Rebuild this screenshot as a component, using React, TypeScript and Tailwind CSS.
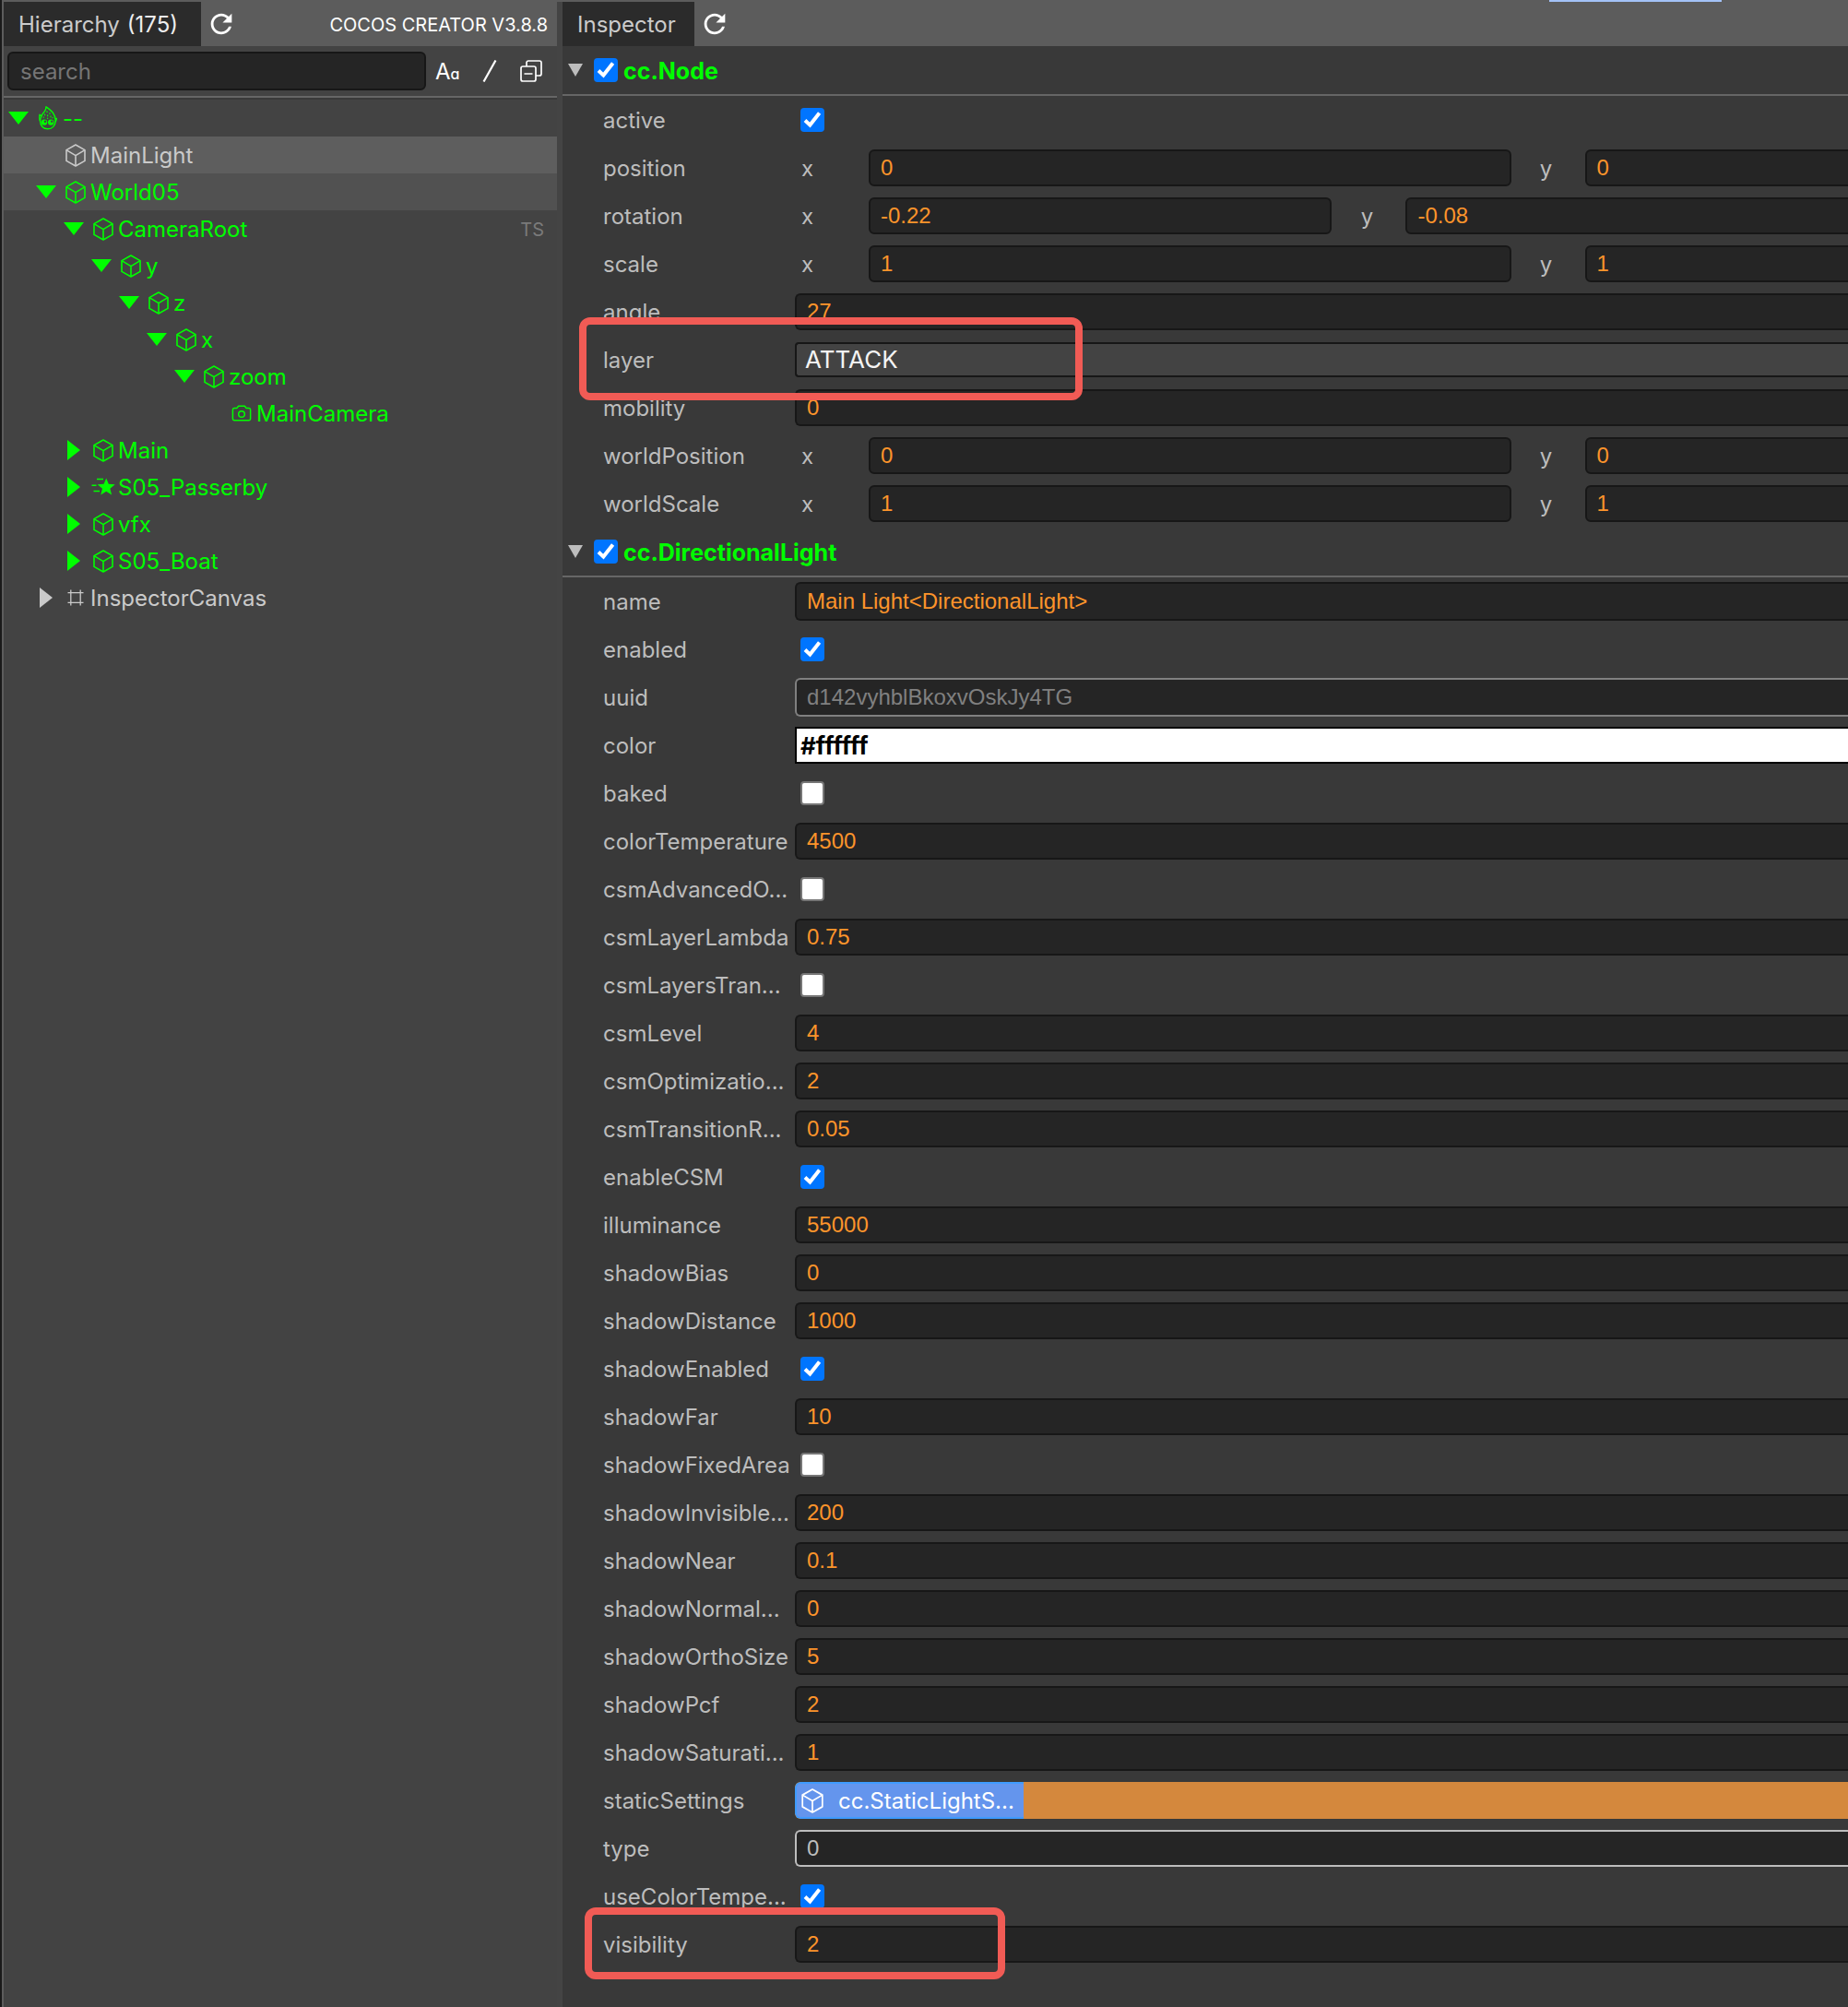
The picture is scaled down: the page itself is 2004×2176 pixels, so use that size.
import type { ReactNode } from "react";

type IconName = "cocos" | "cube" | "camera" | "star" | "frame";

function CubeIcon({ className }: { className: string }) {
  return (
    <svg viewBox="0 0 22 25" className={className} fill="none" stroke="currentColor" strokeWidth="1.6" strokeLinejoin="round" aria-hidden="true">
      <path d="M11 1 21 6.6V18.4L11 24 1 18.4V6.6Z" />
      <path d="M1 6.6 11 12.6 21 6.6M11 12.6V24" />
    </svg>
  );
}

function CameraIcon() {
  return (
    <svg viewBox="0 0 22 18" className="h-[18px] w-[22px]" fill="none" stroke="currentColor" strokeWidth="1.5" strokeLinejoin="round" aria-hidden="true">
      <path d="M3 3.4H6L7.6 1.2H14.4L16 3.4H19A1.8 1.8 0 0 1 20.6 5.2V15A1.8 1.8 0 0 1 19 16.8H3A1.8 1.8 0 0 1 1.4 15V5.2A1.8 1.8 0 0 1 3 3.4Z" />
      <circle cx="11" cy="10" r="3.3" />
    </svg>
  );
}

function StarIcon() {
  return (
    <svg viewBox="0 0 26 20" className="h-5 w-[26px] shrink-0" aria-hidden="true">
      <path fill="currentColor" d="M16.2 0.4 18.8 6.8 25.7 7.3 20.4 11.7 22.1 18.5 16.2 14.8 10.3 18.5 12 11.7 6.7 7.3 13.6 6.8Z" />
      <path stroke="currentColor" strokeWidth="1.5" d="M6 1.6H13M0.5 8.2H5.5M2.5 14.6H9" />
    </svg>
  );
}

function FrameIcon() {
  return (
    <svg viewBox="0 0 18 18" className="h-[18px] w-[18px]" fill="none" stroke="currentColor" strokeWidth="1.3" aria-hidden="true">
      <path d="M3.8 0.5V17.5M14.2 0.5V17.5M0.5 3.6H17.5M0.5 14.4H17.5" />
    </svg>
  );
}

function CocosIcon() {
  return (
    <svg viewBox="0 0 20 26" className="h-[26px] w-5" fill="none" stroke="currentColor" strokeWidth="1.4" strokeLinejoin="round" aria-hidden="true">
      <path d="M8 0.8C11 3 13.6 4.8 15.2 7C17.2 9.6 18.2 12 18.2 15.6C18.2 21.4 14.6 24.8 9.8 24.8C5 24.8 1.6 21.4 1.6 16C1.6 11.4 4.4 8 6.6 5.4C7.6 3.8 8.1 2.4 8 0.8Z" />
      <path d="M1.8 17.5C0.6 15 0.4 12 1 9.2L3.2 10.8M18 17.4C18.8 16.4 19.3 15 19.5 13.4L18 13.8" strokeWidth="1.2" />
      <circle cx="6" cy="17.6" r="3.2" fill="currentColor" stroke="none" />
      <circle cx="13.2" cy="17.6" r="3.2" fill="currentColor" stroke="none" />
      <circle cx="7" cy="16.8" r="1.2" fill="#434343" stroke="none" />
      <circle cx="14.2" cy="16.8" r="1.2" fill="#434343" stroke="none" />
      <path d="M9 5.4V7M12 7.2V8.8M6.6 8.6V10.2M9.6 9.6V11.2M13 10.6V12.2M5.2 11.6V12.8M9.6 12.8V14M15 12V13.2" strokeWidth="1.2" />
    </svg>
  );
}

function NodeIcon({ name }: { name: IconName }) {
  if (name === "cocos") return <CocosIcon />;
  if (name === "camera") return <CameraIcon />;
  if (name === "star") return <StarIcon />;
  if (name === "frame") return <FrameIcon />;
  return <CubeIcon className="h-[25px] w-[22px]" />;
}

function RefreshButton({ label }: { label: string }) {
  return (
    <button type="button" aria-label={label} className="ml-[5px] text-white">
      <svg viewBox="0 0 24 24" className="h-[34px] w-[34px]" fill="currentColor" aria-hidden="true">
        <path d="M17.65 6.35C16.2 4.9 14.21 4 12 4c-4.42 0-7.99 3.58-7.99 8s3.57 8 7.99 8c3.73 0 6.84-2.55 7.73-6h-2.08c-.82 2.33-3.04 4-5.65 4-3.31 0-6-2.69-6-6s2.69-6 6-6c1.66 0 3.14.69 4.22 1.78L13 11h7V4l-2.35 2.35z" />
      </svg>
    </button>
  );
}

type TreeNode = {
  label: string;
  depth: number;
  icon: IconName;
  arrow?: "down" | "right";
  muted?: boolean;
  tag?: string;
  bg?: string;
};

const nodes: TreeNode[] = [
  { label: "--", depth: 0, icon: "cocos", arrow: "down" },
  { label: "MainLight", depth: 1, icon: "cube", muted: true, bg: "bg-[#5e5e5e]" },
  { label: "World05", depth: 1, icon: "cube", arrow: "down", bg: "bg-[#515151]" },
  { label: "CameraRoot", depth: 2, icon: "cube", arrow: "down", tag: "TS" },
  { label: "y", depth: 3, icon: "cube", arrow: "down" },
  { label: "z", depth: 4, icon: "cube", arrow: "down" },
  { label: "x", depth: 5, icon: "cube", arrow: "down" },
  { label: "zoom", depth: 6, icon: "cube", arrow: "down" },
  { label: "MainCamera", depth: 7, icon: "camera" },
  { label: "Main", depth: 2, icon: "cube", arrow: "right" },
  { label: "S05_Passerby", depth: 2, icon: "star", arrow: "right" },
  { label: "vfx", depth: 2, icon: "cube", arrow: "right" },
  { label: "S05_Boat", depth: 2, icon: "cube", arrow: "right" },
  { label: "InspectorCanvas", depth: 1, icon: "frame", arrow: "right", muted: true },
];

const indents = ["pl-px", "pl-[31px]", "pl-[61px]", "pl-[91px]", "pl-[121px]", "pl-[151px]", "pl-[181px]", "pl-[211px]"];

function TreeRow({ node }: { node: TreeNode }) {
  return (
    <li className={`flex h-10 items-center pr-3.5 ${indents[node.depth]} ${node.bg ?? ""} ${node.muted ? "text-[#cacaca]" : "text-[#00ff00]"}`}>
      <span className="flex w-[30px] shrink-0 justify-center">
        {node.arrow && (
          <button type="button" aria-label={`Toggle ${node.label}`}>
            {node.arrow === "down" ? (
              <svg viewBox="0 0 22 14" className="h-3.5 w-[22px]" fill="currentColor" aria-hidden="true">
                <path d="M0 0H22L11 14Z" />
              </svg>
            ) : (
              <svg viewBox="0 0 14 22" className="h-[22px] w-3.5" fill="currentColor" aria-hidden="true">
                <path d="M0 0V22L14 11Z" />
              </svg>
            )}
          </button>
        )}
      </span>
      <span className="ml-1 flex w-[26px] shrink-0 justify-center">
        <NodeIcon name={node.icon} />
      </span>
      <span className="ml-[3px] flex-1 whitespace-nowrap pt-0.5">{node.label}</span>
      {node.tag && <span className="pt-0.5 text-xl text-[#7a7a7a]">{node.tag}</span>}
    </li>
  );
}

function Hierarchy() {
  return (
    <section className="w-[606px] shrink-0 border-r-[6px] border-[#444444] bg-[#434343]">
      <header className="flex h-12 items-center bg-[#5c5c5c]">
        <h2 className="flex h-full w-[214px] items-center gap-2 bg-[#2b2b2b] pl-4 pt-0.5 text-[#cccccc]">
          Hierarchy <span className="text-[#eeeeee]">(175)</span>
        </h2>
        <RefreshButton label="Refresh hierarchy" />
        <span className="ml-auto pr-2.5 pt-0.5 text-xl text-white">COCOS CREATOR V3.8.8</span>
      </header>
      <div className="flex h-[54px] items-center pl-1 text-white">
        <input
          type="text"
          aria-label="Search nodes"
          placeholder="search"
          className="h-[42px] min-w-0 flex-1 rounded-md border-2 border-[#171717] bg-[#252525] px-3 placeholder:text-[#757575]"
        />
        <button type="button" aria-label="Match case" className="ml-2.5 flex w-7 items-baseline pt-0.5">
          A<span className="text-base font-medium [font-feature-settings:'cv11']">a</span>
        </button>
        <button type="button" aria-label="Regular expression" className="ml-[22px]">
          <svg viewBox="0 0 18 24" className="h-6 w-[18px]" stroke="currentColor" strokeWidth="2.2" aria-hidden="true">
            <path d="M2.5 23.5 15.5 0.5" />
          </svg>
        </button>
        <button type="button" aria-label="Collapse all" className="ml-6 mr-4">
          <svg viewBox="0 0 24 24" className="h-6 w-6" fill="none" stroke="currentColor" strokeWidth="1.7" aria-hidden="true">
            <rect x="1" y="7" width="16" height="16" rx="2" />
            <path d="M7 7V3A2 2 0 0 1 9 1H21A2 2 0 0 1 23 3V15A2 2 0 0 1 21 17H17M4.5 15H13.5" />
          </svg>
        </button>
      </div>
      <div className="h-0.5 bg-[#666666]" />
      <div className="h-0.5 bg-[#3a3a3a]" />
      <ul>
        {nodes.map((n) => (
          <TreeRow key={n.label} node={n} />
        ))}
      </ul>
    </section>
  );
}

const arial = "font-['Liberation_Sans',Arial,sans-serif]";
const fieldBase = "w-full rounded-l-md border-2 border-r-0 bg-[#252525] pl-[11px]";

function Row({ label, htmlFor, mark, children }: { label: string; htmlFor?: string; mark?: ReactNode; children: ReactNode }) {
  return (
    <div className="relative flex h-[52px] items-center pl-11">
      <label htmlFor={htmlFor} className="w-52 shrink-0 whitespace-nowrap pt-0.5">
        {label}
      </label>
      <div className="flex min-w-0 flex-1 items-center overflow-hidden">{children}</div>
      {mark}
    </div>
  );
}

function TextRow({ label, value, tone = "value", mark }: { label: string; value: string; tone?: "value" | "name" | "uuid"; mark?: ReactNode }) {
  const look =
    tone === "uuid"
      ? "h-[42px] border-[#808080] text-[#808080]"
      : tone === "name"
        ? "h-[42px] border-[#171717] text-[#fd942b]"
        : "h-10 border-[#171717] text-[#fd942b]";
  return (
    <Row label={label} htmlFor={label} mark={mark}>
      <input id={label} type="text" defaultValue={value} readOnly={tone === "uuid"} className={`${fieldBase} ${arial} ${look}`} />
    </Row>
  );
}

function Tick({ id, checked }: { id: string; checked: boolean }) {
  return (
    <span className="relative flex h-[26px] w-[26px] shrink-0">
      <input
        id={id}
        type="checkbox"
        defaultChecked={checked}
        className="peer h-[26px] w-[26px] appearance-none rounded-sm border-2 border-[#767676] bg-white checked:border-[#0075ff] checked:bg-[#0075ff]"
      />
      <svg viewBox="0 0 26 26" className="pointer-events-none absolute inset-0 hidden h-[26px] w-[26px] peer-checked:block" fill="none" stroke="#ffffff" strokeWidth="4" aria-hidden="true">
        <path d="M5 13.5 10.4 18.6 20.6 5.6" />
      </svg>
    </span>
  );
}

function CheckRow({ label, checked = false }: { label: string; checked?: boolean }) {
  return (
    <Row label={label} htmlFor={label}>
      <span className="pl-1.5">
        <Tick id={label} checked={checked} />
      </span>
    </Row>
  );
}

function VectorRow({ label, x, y, narrow = false }: { label: string; x: string; y: string; narrow?: boolean }) {
  const cell = narrow ? "flex shrink-0 basis-[51%] items-center" : "flex shrink-0 basis-[68%] items-center";
  const field = `h-10 min-w-0 flex-1 rounded-md border-2 border-[#171717] bg-[#252525] pl-[11px] text-[#fd942b] ${arial}`;
  return (
    <Row label={label} htmlFor={`${label}-x`}>
      <div className={cell}>
        <label htmlFor={`${label}-x`} className="w-20 pl-[7px] pt-0.5">
          x
        </label>
        <input id={`${label}-x`} type="text" defaultValue={x} className={field} />
      </div>
      <div className={cell}>
        <label htmlFor={`${label}-y`} className="w-20 pr-1 pt-0.5 text-center">
          y
        </label>
        <input id={`${label}-y`} type="text" defaultValue={y} className={field} />
      </div>
    </Row>
  );
}

function SectionHeader({ title }: { title: string }) {
  return (
    <header className="flex h-[54px] items-center border-b-2 border-[#666666] pl-1.5">
      <button type="button" aria-label={`Toggle ${title}`} className="mr-3 text-[#bdbdbd]">
        <svg viewBox="0 0 16 14" className="h-3.5 w-4" fill="currentColor" aria-hidden="true">
          <path d="M0 0H16L8 14Z" />
        </svg>
      </button>
      <Tick id={title} checked />
      <label htmlFor={title} className="ml-1.5 pt-0.5 text-[25px] font-bold text-[#00ff00]">
        {title}
      </label>
    </header>
  );
}

function Inspector() {
  return (
    <section className="min-w-0 flex-1 bg-[#393939]">
      <header className="flex h-12 items-center bg-[#5c5c5c]">
        <h2 className="flex h-full w-[143px] items-center bg-[#2b2b2b] pl-4 pt-0.5 text-[#cccccc]">Inspector</h2>
        <RefreshButton label="Refresh inspector" />
      </header>
      <SectionHeader title="cc.Node" />
      <CheckRow label="active" checked />
      <VectorRow label="position" x="0" y="0" />
      <VectorRow label="rotation" x="-0.22" y="-0.08" narrow />
      <VectorRow label="scale" x="1" y="1" />
      <TextRow label="angle" value="27" />
      <Row
        label="layer"
        htmlFor="layer"
        mark={<span className="pointer-events-none absolute -bottom-[18px] -top-5 left-[18px] z-10 w-[546px] rounded-xl border-8 border-[#f15b55]" />}
      >
        <select id="layer" className="h-[38px] w-full appearance-none rounded-l border-2 border-r-0 border-[#171717] bg-[#434343] pl-[9px] text-[26px] leading-8 text-[#f4f4f4]">
          <option>ATTACK</option>
        </select>
      </Row>
      <TextRow label="mobility" value="0" />
      <VectorRow label="worldPosition" x="0" y="0" />
      <VectorRow label="worldScale" x="1" y="1" />
      <SectionHeader title="cc.DirectionalLight" />
      <TextRow label="name" value="Main Light<DirectionalLight>" tone="name" />
      <CheckRow label="enabled" checked />
      <TextRow label="uuid" value="d142vyhblBkoxvOskJy4TG" tone="uuid" />
      <Row label="color" htmlFor="color">
        <input id="color" type="text" defaultValue="#ffffff" className="h-10 w-full border-2 border-r-0 border-black bg-white pl-1 text-[26px] font-bold text-black" />
      </Row>
      <CheckRow label="baked" />
      <TextRow label="colorTemperature" value="4500" />
      <CheckRow label="csmAdvancedO..." />
      <TextRow label="csmLayerLambda" value="0.75" />
      <CheckRow label="csmLayersTran..." />
      <TextRow label="csmLevel" value="4" />
      <TextRow label="csmOptimizatio..." value="2" />
      <TextRow label="csmTransitionR..." value="0.05" />
      <CheckRow label="enableCSM" checked />
      <TextRow label="illuminance" value="55000" />
      <TextRow label="shadowBias" value="0" />
      <TextRow label="shadowDistance" value="1000" />
      <CheckRow label="shadowEnabled" checked />
      <TextRow label="shadowFar" value="10" />
      <CheckRow label="shadowFixedArea" />
      <TextRow label="shadowInvisible..." value="200" />
      <TextRow label="shadowNear" value="0.1" />
      <TextRow label="shadowNormal..." value="0" />
      <TextRow label="shadowOrthoSize" value="5" />
      <TextRow label="shadowPcf" value="2" />
      <TextRow label="shadowSaturati..." value="1" />
      <Row label="staticSettings" htmlFor="staticSettings">
        <div className="flex h-10 w-full overflow-hidden rounded-l-md bg-[#d4883d]">
          <button id="staticSettings" type="button" className="flex w-[248px] shrink-0 items-center gap-4 whitespace-nowrap rounded-l-md border-2 border-r-0 border-[#3f9bff] bg-[#6495ed] pl-[5px] text-white">
            <CubeIcon className="h-[27px] w-6" />
            <span className="pt-0.5">cc.StaticLightS...</span>
          </button>
        </div>
      </Row>
      <Row label="type" htmlFor="type">
        <select id="type" className={`h-10 appearance-none border-[#bdbdbd] text-[#bdbdbd] ${fieldBase} ${arial}`}>
          <option>0</option>
        </select>
      </Row>
      <CheckRow label="useColorTempe..." checked />
      <TextRow
        label="visibility"
        value="2"
        mark={<span className="pointer-events-none absolute -bottom-3 -top-3.5 left-6 z-10 w-[456px] rounded-xl border-8 border-[#f15b55]" />}
      />
    </section>
  );
}

export default function App() {
  return (
    <div className="flex min-h-screen flex-col overflow-hidden bg-[#1a1a1a] pl-0.5 font-[Inter,sans-serif] text-[24px] leading-8 text-[#bdbdbd]">
      <div className="flex h-0.5 bg-[#5c5c5c]">
        <div className="ml-[83.8%] w-[187px] bg-[#a3c2f7]" />
      </div>
      <div className="flex flex-1 border-l-2 border-[#5c5c5c]">
        <Hierarchy />
        <Inspector />
      </div>
    </div>
  );
}
